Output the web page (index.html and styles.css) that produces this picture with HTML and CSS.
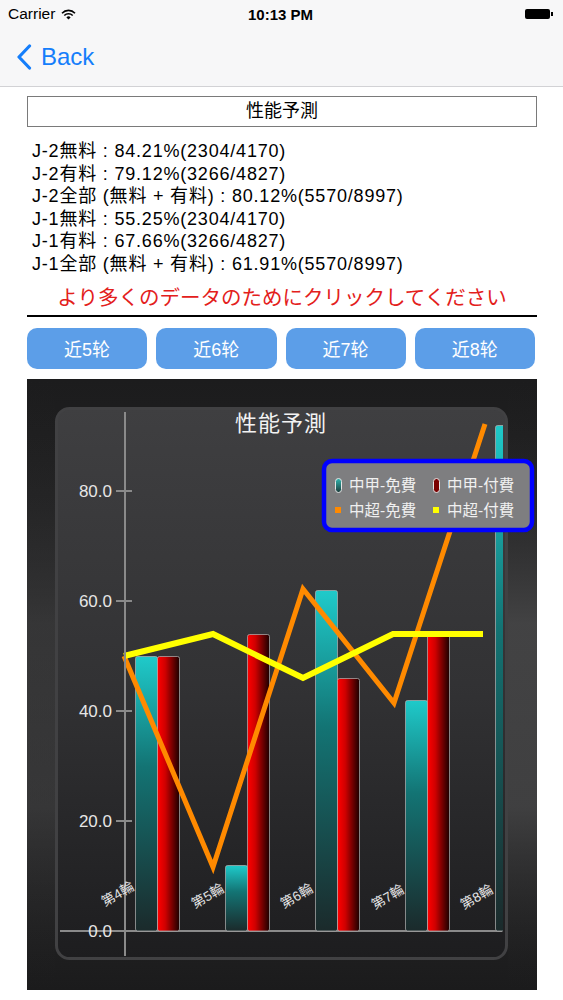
FILE: index.html
```html
<!DOCTYPE html>
<html lang="ja">
<head>
<meta charset="utf-8">
<title>性能予測</title>
<link rel="stylesheet" href="styles.css">
</head>
<body>
<div class="status">
  <div class="carrier">Carrier
    <svg class="wifi" width="15" height="11" viewBox="0 0 15 11">
      <path d="M1 4.2 A9 9 0 0 1 14 4.2" fill="none" stroke="#000" stroke-width="1.6"/>
      <path d="M3.3 6.5 A6 6 0 0 1 11.7 6.5" fill="none" stroke="#000" stroke-width="1.6"/>
      <path d="M7.5 10.5 L5.4 8.4 A3 3 0 0 1 9.6 8.4 Z" fill="#000"/>
    </svg>
  </div>
  <div class="time">10:13 PM</div>
  <div class="battery"><span class="batt-body"></span><span class="batt-nub"></span></div>
</div>
<div class="nav">
  <svg class="chev" width="16" height="26" viewBox="0 0 16 26"><path d="M13.5 2 L3 13 L13.5 24" fill="none" stroke="#157efb" stroke-width="3.2" stroke-linecap="round" stroke-linejoin="round"/></svg>
  <span class="back">Back</span>
</div>
<div class="content">
  <div class="title-box">性能予測</div>
  <div class="stats">
    <div>J-2無料 : 84.21%(2304/4170)</div>
    <div>J-2有料 : 79.12%(3266/4827)</div>
    <div>J-2全部 (無料 + 有料) : 80.12%(5570/8997)</div>
    <div>J-1無料 : 55.25%(2304/4170)</div>
    <div>J-1有料 : 67.66%(3266/4827)</div>
    <div>J-1全部 (無料 + 有料) : 61.91%(5570/8997)</div>
  </div>
  <div class="notice">より多くのデータのためにクリックしてください</div>
  <div class="rule"></div>
  <div class="buttons">
    <div class="btn">近5轮</div>
    <div class="btn">近6轮</div>
    <div class="btn">近7轮</div>
    <div class="btn">近8轮</div>
  </div>
  <div class="chart">
    <svg width="510" height="611" viewBox="27 379 510 611">
      <defs>
        <linearGradient id="outer" x1="0" y1="0" x2="0" y2="1">
          <stop offset="0" stop-color="#1c1c1d"/>
          <stop offset="0.45" stop-color="#262627"/>
          <stop offset="0.7" stop-color="#2a2a2b"/>
          <stop offset="1" stop-color="#1b1b1c"/>
        </linearGradient>
        <linearGradient id="edge" x1="0" y1="0" x2="0" y2="1">
          <stop offset="0" stop-color="#1f1f20" stop-opacity="0"/>
          <stop offset="0.4" stop-color="#4a4a4b"/>
          <stop offset="0.7" stop-color="#454546"/>
          <stop offset="1" stop-color="#1f1f20" stop-opacity="0"/>
        </linearGradient>
        <linearGradient id="panel" x1="0" y1="0" x2="0" y2="1">
          <stop offset="0" stop-color="#3f3f41"/>
          <stop offset="0.5" stop-color="#323234"/>
          <stop offset="1" stop-color="#1d1d1f"/>
        </linearGradient>
        <linearGradient id="cyan" x1="0" y1="0" x2="0" y2="1">
          <stop offset="0" stop-color="#1fcaca"/>
          <stop offset="0.4" stop-color="#137474"/>
          <stop offset="1" stop-color="#1b2a2b"/>
        </linearGradient>
        <linearGradient id="red" x1="0" y1="0" x2="1" y2="0">
          <stop offset="0" stop-color="#ff0000"/>
          <stop offset="0.35" stop-color="#d00000"/>
          <stop offset="1" stop-color="#1a0000"/>
        </linearGradient>
        <linearGradient id="pillc" x1="0" y1="0" x2="0" y2="1">
          <stop offset="0" stop-color="#2fb7b0"/>
          <stop offset="1" stop-color="#1c3a3a"/>
        </linearGradient>
        <clipPath id="clip"><rect x="58" y="410" width="445" height="547" rx="12"/></clipPath>
      </defs>
      <rect x="27" y="379" width="510" height="611" fill="url(#outer)"/>
      <rect x="508" y="379" width="29" height="611" fill="url(#edge)" opacity="0.8"/>
      <rect x="27" y="379" width="28" height="611" fill="url(#edge)" opacity="0.45"/>
      <rect x="56.5" y="408.5" width="450" height="550" rx="13" fill="url(#panel)" stroke="#414143" stroke-width="3"/>
      <text x="281" y="431" class="ctitle" text-anchor="middle">性能予測</text>
      <g clip-path="url(#clip)">
        <line x1="60" y1="931" x2="502" y2="931" stroke="#8a8a8a" stroke-width="2"/>
        <g stroke="#b4b4b4" stroke-width="1" stroke-opacity="0.7">
          <rect x="135.5" y="656.5" width="22" height="274.5" rx="2" fill="url(#cyan)"/>
          <rect x="157.5" y="656.5" width="22" height="274.5" rx="2" fill="url(#red)"/>
          <rect x="225.5" y="865.5" width="22" height="65.5" rx="2" fill="url(#cyan)"/>
          <rect x="247.5" y="634.5" width="22" height="296.5" rx="2" fill="url(#red)"/>
          <rect x="315.5" y="590.5" width="22" height="340.5" rx="2" fill="url(#cyan)"/>
          <rect x="337.5" y="678.5" width="22" height="252.5" rx="2" fill="url(#red)"/>
          <rect x="405.5" y="700.5" width="22" height="230.5" rx="2" fill="url(#cyan)"/>
          <rect x="427.5" y="634.5" width="22" height="296.5" rx="2" fill="url(#red)"/>
          <rect x="495.5" y="425.5" width="22" height="505.5" rx="2" fill="url(#cyan)"/>
        </g>
        <polyline points="124,656 213,867 303,589 394,703 485,424" fill="none" stroke="#ff8a00" stroke-width="5" stroke-linejoin="miter"/>
        <polyline points="124,656 213,634 303,678 393,634 483,634" fill="none" stroke="#ffff00" stroke-width="6" stroke-linejoin="miter"/>
      </g>
      <line x1="125" y1="412" x2="125" y2="956" stroke="#8a8a8a" stroke-width="2"/>
      <g stroke="#8a8a8a" stroke-width="2">
        <line x1="116" y1="491" x2="132" y2="491"/>
        <line x1="116" y1="601" x2="132" y2="601"/>
        <line x1="116" y1="711" x2="132" y2="711"/>
        <line x1="116" y1="821" x2="132" y2="821"/>
      </g>
      <g class="ylab" text-anchor="end">
        <text x="112" y="497">80.0</text>
        <text x="112" y="607">60.0</text>
        <text x="112" y="717">40.0</text>
        <text x="112" y="827">20.0</text>
        <text x="112" y="937">0.0</text>
      </g>
      <g class="xlab" text-anchor="middle">
        <text transform="translate(120 898) rotate(-30)">第4輪</text>
        <text transform="translate(210 900) rotate(-30)">第5輪</text>
        <text transform="translate(299 900) rotate(-30)">第6輪</text>
        <text transform="translate(390 901) rotate(-30)">第7輪</text>
        <text transform="translate(479 901) rotate(-30)">第8輪</text>
      </g>
      <rect x="324" y="461" width="208" height="69" rx="8" fill="#7e7e80" stroke="#0000ff" stroke-width="4.5"/>
      <rect x="335.5" y="478.5" width="6" height="14" rx="3" fill="url(#pillc)" stroke="#e6e6e6" stroke-width="1"/>
      <rect x="433.5" y="478.5" width="6" height="14" rx="3" fill="#7a0000" stroke="#e6e6e6" stroke-width="1"/>
      <rect x="335" y="507" width="6" height="6" fill="#ff8a00"/>
      <rect x="433" y="507" width="6" height="6" fill="#ffff00"/>
      <g class="leg">
        <text x="349" y="491">中甲-免費</text>
        <text x="447" y="491">中甲-付費</text>
        <text x="349" y="516">中超-免費</text>
        <text x="447" y="516">中超-付費</text>
      </g>
    </svg>
  </div>
</div>
</body>
</html>
```
FILE: styles.css
```css
body {
  margin: 0;
  width: 563px;
  background: #fff;
  font-family: "Liberation Sans", "Noto Sans CJK JP", sans-serif;
  color: #000;
}
.status {
  height: 28px;
  background: #f7f7f8;
  display: grid;
  grid-template-columns: 1fr auto 1fr;
  align-items: center;
  padding: 0 10px 0 8px;
  font-size: 15.5px;
}
.carrier {
  display: flex;
  align-items: center;
  gap: 6px;
}
.time {
  font-weight: bold;
  font-size: 15px;
}
.battery {
  justify-self: end;
  display: flex;
  align-items: center;
}
.batt-body {
  width: 25px;
  height: 10px;
  background: #000;
  border-radius: 2px;
}
.batt-nub {
  width: 2px;
  height: 4px;
  background: #000;
  margin-left: 1px;
}
.nav {
  height: 58px;
  background: #f7f7f8;
  border-bottom: 1px solid #d2d2d5;
  display: flex;
  align-items: center;
  padding-left: 16px;
  gap: 9px;
  color: #157efb;
  font-size: 24px;
}
.content {
  padding: 0 26px 0 27px;
}
.title-box {
  margin-top: 9px;
  height: 29px;
  border: 1px solid #7a7a7a;
  text-align: center;
  font-size: 18px;
  line-height: 29px;
}
.stats {
  margin-top: 13px;
  padding-left: 5px;
  font-size: 18px;
  letter-spacing: 0.8px;
  line-height: 22.6px;
}
.notice {
  margin-top: 10px;
  text-align: center;
  color: #e3201b;
  font-size: 20.5px;
  line-height: 24px;
}
.rule {
  height: 2px;
  background: #000;
  margin-top: 5px;
}
.buttons {
  display: grid;
  grid-template-columns: repeat(4, 1fr);
  gap: 9px;
  margin-top: 11px;
  padding-right: 2px;
}
.btn {
  height: 41px;
  border-radius: 10px;
  background: #5c9ee8;
  color: #fff;
  font-size: 18px;
  display: flex;
  align-items: center;
  justify-content: center;
}
.chart {
  margin-top: 10px;
  height: 611px;
}
.chart svg {
  display: block;
}
.ctitle {
  fill: #f2f2f2;
  font-size: 22px;
  letter-spacing: 1px;
}
.ylab text {
  fill: #e6e6e6;
  font-size: 17px;
}
.xlab text {
  fill: #e4e4e4;
  font-size: 13.5px;
}
.leg text {
  fill: #f0f0f0;
  font-size: 15.5px;
}
```
